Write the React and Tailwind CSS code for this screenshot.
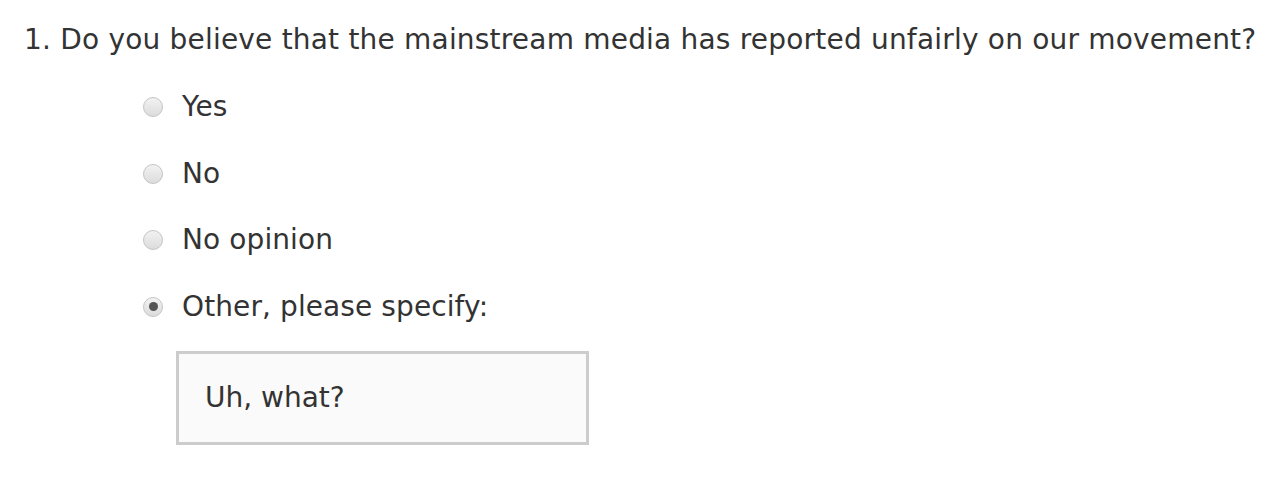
export default function App() {
    const options = ["Yes", "No", "No opinion", "Other, please specify:"]
    return (
        <div className="w-[1280px] h-[478px] bg-white text-[#333] font-['DejaVu_Sans',sans-serif]">
            <p className="pt-[22px] pl-[24px] text-[28px] leading-[36px] whitespace-nowrap tracking-[0.2px]">
                1. Do you believe that the mainstream media has reported unfairly on our movement?
            </p>
            <ul className="mt-[16px] pl-[143px]">
                {options.map((o, i) => (
                    <li key={o} className="flex items-center h-[66.5px]">
                        <span className="w-[20px] h-[20px] rounded-full border border-[#c4c4c4] bg-gradient-to-b from-[#f2f2f2] to-[#dcdcdc] flex items-center justify-center">
                            {i === 3 && <span className="w-[9px] h-[9px] rounded-full bg-[#555]" />}
                        </span>
                        <span className="ml-[19px] text-[28px] tracking-[0.1px]">{o}</span>
                    </li>
                ))}
            </ul>
            <div className="ml-[176px] mt-[11px] w-[413px] h-[94px] border-[3px] border-[#cccccc] bg-[#fafafa] flex items-center pl-[26px] text-[28px]">
                Uh, what?
            </div>
        </div>
    )
}
